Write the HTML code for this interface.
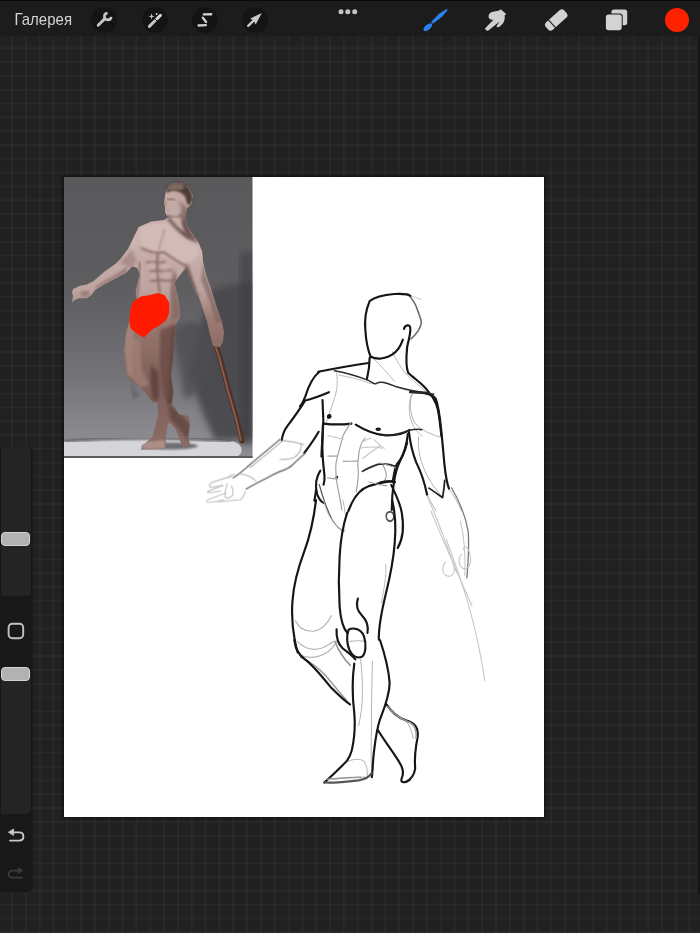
<!DOCTYPE html>
<html><head><meta charset="utf-8">
<style>
html,body{margin:0;padding:0;}
body{width:700px;height:933px;overflow:hidden;position:relative;background:#212121;font-family:"Liberation Sans",sans-serif;}
#grid{position:absolute;left:0;top:0;width:700px;height:933px;
background-image:linear-gradient(to right, rgba(255,255,255,0.03) 2px, transparent 2px),linear-gradient(to bottom, rgba(255,255,255,0.03) 2px, transparent 2px);
background-size:13.83px 13.82px;background-position:11.0px 5.9px;}
#top{position:absolute;left:0;top:0;width:700px;height:36px;background:#1c1c1c;border-top:1.5px solid #0a0a0a;box-sizing:border-box;}
#gal{position:absolute;left:14px;top:10px;font-size:15px;color:#d6d6d6;letter-spacing:0.1px;}
.circ{position:absolute;top:6px;width:26px;height:26px;border-radius:50%;background:#141414;}
#canvas{position:absolute;left:64px;top:177px;width:480px;height:640px;background:#fff;box-shadow:0 0 3px 1px rgba(0,0,0,0.6);}
#photo{position:absolute;left:0;top:0;width:188.5px;height:281px;background:#555;}
#side{position:absolute;left:0;top:447px;width:33px;height:445px;background:#181818;border-radius:0 5px 5px 0;}
.track{position:absolute;left:1px;width:30px;background:#242424;border-radius:0 5px 5px 0;}
.thumb{position:absolute;left:1px;width:29px;height:14px;background:#b2b2b2;border:1px solid #d2d2d2;box-sizing:border-box;border-radius:4px;}
</style></head><body>
<div id="grid"></div>
<div style="position:absolute;left:697.5px;top:36px;width:2.5px;height:858px;background:#161616;"></div>
<div id="top">
  <div class="circ" style="left:91.4px"></div>
  <div class="circ" style="left:141.9px"></div>
  <div class="circ" style="left:191.9px"></div>
  <div class="circ" style="left:241.9px"></div>
  <svg style="position:absolute;left:0;top:0;will-change:transform" width="700" height="36" viewBox="0 0 700 36">
    <text x="14.5" y="24" font-family="Liberation Sans" font-size="16.2" fill="#d4d4d4" textLength="57.5" lengthAdjust="spacingAndGlyphs">Галерея</text>
    <!-- wrench -->
    <g stroke="#c4c4c4" fill="none" stroke-linecap="round">
      <path d="M98.2 24.3 L104.6 17.9" stroke-width="2.9"/>
      <path d="M111.2 15.9 A3.4 3.4 0 1 1 107.6 12.1" stroke-width="2.7" stroke-linecap="butt"/>
    </g>
    <!-- magic wand -->
    <g fill="#cfcfcf" stroke="none">
      <path d="M149.4 25.4 L155.5 19.3" stroke="#c8c8c8" stroke-width="2.9" stroke-linecap="round"/>
      <path d="M156.5 18.3 L160.4 14.4" stroke="#d8d8d8" stroke-width="2.9" stroke-linecap="round"/>
      <path d="M154.4 17.4 L158.2 21.2" stroke="#141414" stroke-width="0.9"/>
      <path d="M151.6 12.2 L152.3 14.7 L154.8 15.4 L152.3 16.1 L151.6 18.6 L150.9 16.1 L148.4 15.4 L150.9 14.7 Z"/>
      <circle cx="156.6" cy="13.1" r="1"/>
    </g>
    <!-- S tool -->
    <g stroke="#d0d0d0" stroke-width="2.4" stroke-linecap="round" fill="none">
      <path d="M203.8 13.4 L211.2 13.3"/>
      <path d="M202.8 16.8 L206.1 20.9"/>
      <path d="M198.6 24.5 L205.8 24.1"/>
    </g>
    <!-- arrow -->
    <g fill="#c8c8c8" stroke="none">
      <path d="M248.2 24.8 L254.6 18.6" stroke="#c8c8c8" stroke-width="2.4" stroke-linecap="round"/>
      <path d="M261.8 12.1 L250.2 17.4 L253.6 19.5 L255.7 23.4 Z"/>
    </g>
    <!-- dots -->
    <circle cx="341" cy="10.7" r="2.5" fill="#c4c4c4"/>
    <circle cx="347.8" cy="10.7" r="2.5" fill="#c4c4c4"/>
    <circle cx="354.7" cy="10.7" r="2.5" fill="#c4c4c4"/>
    <!-- brush -->
    <g fill="#2b80f2" stroke="none">
      <path d="M432.8 22.4 L441.6 16.0 L447.4 9.0 C447.2 8.4 446.9 8.1 446.6 8.2 L439.0 13.0 L431.4 20.9 Z" stroke="#2b80f2" stroke-width="0.5" stroke-linejoin="round"/>
      <ellipse cx="427.8" cy="26.2" rx="5.3" ry="2.6" transform="rotate(-40 427.8 26.2)"/>
    </g>
    <!-- smudge -->
    <path fill="#d0d0d0" d="M485.2 27.2 L493.6 18.4 C491.4 19.2 489.2 18.4 488.6 16.2 C488.2 13.8 489.6 11.6 492 10.9 L499.2 9.6 L500.6 8.2 L506.2 12.9 L504.6 14.6 C505.2 17.2 504.4 20.6 502.8 22.4 L499.8 25.6 C498.6 26.6 497.0 26.6 496.4 25.6 L499.6 20.4 L488.4 29.6 C487.0 30.2 484.8 29.0 485.2 27.2 Z"/>
    <!-- eraser -->
    <g transform="translate(556.2,19) rotate(-42)">
      <rect x="-12.4" y="-5.0" width="24.8" height="10.0" rx="3.4" fill="#d2d2d2"/>
      <rect x="-6.2" y="-5.5" width="1.1" height="11" fill="#1c1c1c"/>
    </g>
    <!-- layers -->
    <rect x="611.4" y="8.4" width="15.8" height="15.8" rx="2.6" fill="#d0d0d0"/>
    <rect x="604.9" y="12.4" width="17.8" height="17.8" rx="3.2" fill="#1c1c1c"/>
    <rect x="605.9" y="13.4" width="15.8" height="15.8" rx="2.6" fill="#d4d4d4"/>
    <!-- red color -->
    <circle cx="677" cy="19" r="12" fill="#ff2200"/>
  </svg>
</div>
<div id="canvas">
  </div>
<svg style="position:absolute;left:0;top:0" width="700" height="933" viewBox="0 0 700 933">
<defs>
  <clipPath id="pc"><rect x="64" y="177" width="188.5" height="281"/></clipPath>
  <linearGradient id="bgL" x1="0" y1="0" x2="0" y2="1">
    <stop offset="0" stop-color="#59595b"/>
    <stop offset="0.4" stop-color="#5e5e61"/>
    <stop offset="0.7" stop-color="#727277"/>
    <stop offset="0.9" stop-color="#88888e"/>
    <stop offset="1" stop-color="#8c8c92"/>
  </linearGradient>
  <linearGradient id="skin" x1="0" y1="0" x2="0" y2="1">
    <stop offset="0" stop-color="#bca4a0"/>
    <stop offset="0.2" stop-color="#cab2ad"/>
    <stop offset="0.4" stop-color="#bea4a0"/>
    <stop offset="0.52" stop-color="#98786f"/>
    <stop offset="0.75" stop-color="#7e5e57"/>
    <stop offset="1" stop-color="#8c6c64"/>
  </linearGradient>
  <clipPath id="bodyc"><path id="bodyp" d="M171.6 183.4 L181.6 182.7 L188.7 187 L193 195.6 L191.6 204.1 L187 208.4 L185 217 L187 226 L193 235 L198.7 243 L202 251 L203 262 L206 275 L211 289 L217 308 L222 322 L224 332 L223 342 L220 347 L213 346 L210 335 L207 322 L200 300 L194 289 L189 277 L187 267 L180 275 L174.3 283 L177 293 L179 303 L180 317 L176 324 L174.4 341 L173.5 357 L171 375 L173.5 392 L172 404 L179.5 414.5 L188.5 416 L190 425 L188.5 437 L190 444.5 L182.5 447.5 L181 443 L175 428 L169 422 L167.5 425 L166 437 L166 447.5 L164.5 449 L141 449.7 L142 446 L152.5 437 L155.5 425 L158.5 413 L157 402 L152.5 402.5 L145 392 L136 384.5 L128.5 378.5 L125.5 369.5 L124 350 L126.2 332 L129.7 320 L131 308 L134 301 L137 300 L135.7 293 L137 285.7 L140 274 L137 268 L132.6 266.3 L125.7 273.1 L114.3 278.9 L104 284.6 L94.9 290.3 L91.4 294.9 L86.9 298.3 L78.9 298.3 L74.3 300.6 L72 302.3 L73 296 L72 292.6 L73.1 289.1 L80 285.7 L86.9 284.6 L93.7 281 L104 272 L116.6 262.9 L121 258.3 L128 249 L132.6 240 L138.6 227 L151.4 221.4 L164.3 220 L167 218 L169 217 L167 216 L165 212 L165 207 L164 203 L165 197 L166 190 Z"/></clipPath>
  <filter id="bl3"><feGaussianBlur stdDeviation="3"/></filter>
  <filter id="bl2"><feGaussianBlur stdDeviation="1.6"/></filter>
  <filter id="bl1"><feGaussianBlur stdDeviation="0.8"/></filter>
</defs>
<g clip-path="url(#pc)">
  <rect x="64" y="177" width="189" height="281" fill="url(#bgL)"/>
  <!-- wall shadow right -->
  <path d="M212 290 C225 286 240 284 253 282 L253 440 L215 440 C205 420 195 395 190 370 C195 340 205 310 212 290 Z" fill="#4a4a4e" filter="url(#bl3)" opacity="0.95"/>
  <path d="M172 330 C185 320 200 315 215 340 C210 370 200 395 185 400 Z" fill="#4e4e52" filter="url(#bl3)" opacity="0.8"/>
  <path d="M240 255 L253 250 L253 445 L241 445 Z" fill="#3e3e42" filter="url(#bl3)" opacity="0.6"/>
  <path d="M130 380 L140 395 L133 400 Z" fill="#6a6a70" filter="url(#bl1)"/>
  <!-- platform -->
  <path d="M64 441 C110 437 180 437 232 441 C244 444 244 454 236 457 L64 457 Z" fill="#d6d6da"/>
  <path d="M64 441.5 C110 437.5 180 437.5 232 441.5" stroke="#4a4a4e" stroke-width="1.8" fill="none" filter="url(#bl1)"/>
  <ellipse cx="170" cy="446" rx="28" ry="3.5" fill="#6e6e72" filter="url(#bl1)"/>
  <rect x="64" y="456" width="189" height="2" fill="#5a5a5e"/>
  <!-- staff -->
  <path d="M211 330 L220 358 L229 392 L237 420 L242 441" stroke="#4e3228" stroke-width="5.2" stroke-linecap="round" fill="none"/>
  <path d="M211 330 L220 358 L229 392 L237 420 L241.5 440" stroke="#8a5a4a" stroke-width="2" stroke-linecap="round" fill="none" transform="translate(-0.7,0)"/>
  <!-- body -->
  <path d="M171.6 183.4 L181.6 182.7 L188.7 187 L193 195.6 L191.6 204.1 L187 208.4 L185 217 L187 226 L193 235 L198.7 243 L202 251 L203 262 L206 275 L211 289 L217 308 L222 322 L224 332 L223 342 L220 347 L213 346 L210 335 L207 322 L200 300 L194 289 L189 277 L187 267 L180 275 L174.3 283 L177 293 L179 303 L180 317 L176 324 L174.4 341 L173.5 357 L171 375 L173.5 392 L172 404 L179.5 414.5 L188.5 416 L190 425 L188.5 437 L190 444.5 L182.5 447.5 L181 443 L175 428 L169 422 L167.5 425 L166 437 L166 447.5 L164.5 449 L141 449.7 L142 446 L152.5 437 L155.5 425 L158.5 413 L157 402 L152.5 402.5 L145 392 L136 384.5 L128.5 378.5 L125.5 369.5 L124 350 L126.2 332 L129.7 320 L131 308 L134 301 L137 300 L135.7 293 L137 285.7 L140 274 L137 268 L132.6 266.3 L125.7 273.1 L114.3 278.9 L104 284.6 L94.9 290.3 L91.4 294.9 L86.9 298.3 L78.9 298.3 L74.3 300.6 L72 302.3 L73 296 L72 292.6 L73.1 289.1 L80 285.7 L86.9 284.6 L93.7 281 L104 272 L116.6 262.9 L121 258.3 L128 249 L132.6 240 L138.6 227 L151.4 221.4 L164.3 220 L167 218 L169 217 L167 216 L165 212 L165 207 L164 203 L165 197 L166 190 Z" fill="url(#skin)"/>
  <g clip-path="url(#bodyc)">
    <!-- highlights -->
    <path d="M140 228 C150 222 165 220 178 226 C190 232 198 240 200 252 C196 262 188 266 178 262 C168 258 160 254 150 252 C142 250 138 240 140 228 Z" fill="#d2bcb8" filter="url(#bl2)" opacity="0.95"/>
    <ellipse cx="134" cy="240" rx="5" ry="9" fill="#ccb4b0" filter="url(#bl2)"/>
    <ellipse cx="171" cy="198" rx="6" ry="11" fill="#c6aaa4" filter="url(#bl1)"/>
    <ellipse cx="156" cy="276" rx="9" ry="12" fill="#bfa5a0" filter="url(#bl2)" opacity="0.8"/>
    <!-- shadows -->
    <path d="M168 214 C172 222 178 228 186 232 C192 236 196 240 199 244 L186 238 C178 232 172 226 168 220 Z" fill="#6e5450" filter="url(#bl2)"/>
    <path d="M186 208 L191 232 L197 240 L186 236 L181 222 Z" fill="#735854" filter="url(#bl1)"/>
    <path d="M141 248 C150 252 158 254 163 252 C170 256 178 262 186 266" stroke="#8e706b" stroke-width="2.2" fill="none" filter="url(#bl1)"/>
    <path d="M165 229 L158 251" stroke="#a48882" stroke-width="1.2" filter="url(#bl1)"/>
    <path d="M187 263 L199 298 L193 299 L183 276 Z" fill="#6a524e" filter="url(#bl2)"/>
    <filter id="bl12"><feGaussianBlur stdDeviation="1.1"/></filter>
    <path d="M158 253 C156 266 157 280 160 292 M146 262 C152 263 158 263 166 262 M150 271 C156 271 162 271 172 270 M150 281 C156 280 165 280 174 281" stroke="#7a5c56" stroke-width="2.2" fill="none" filter="url(#bl12)" opacity="0.75"/>
    <ellipse cx="152" cy="266" rx="4" ry="3.5" fill="#cdb5b0" filter="url(#bl1)" opacity="0.6"/>
    <ellipse cx="165" cy="267" rx="4" ry="3.5" fill="#cdb5b0" filter="url(#bl1)" opacity="0.6"/>
    <ellipse cx="153" cy="276" rx="4" ry="3.5" fill="#c8b0ab" filter="url(#bl1)" opacity="0.6"/>
    <ellipse cx="166" cy="276" rx="4" ry="3.5" fill="#c8b0ab" filter="url(#bl1)" opacity="0.6"/>
    <path d="M174 268 L180 288 L180 317 L172 320 L170 290 Z" fill="#846662" filter="url(#bl2)" opacity="0.8"/>
    <path d="M140 262 L138 290 L136 300" stroke="#8a6a66" stroke-width="2" fill="none" filter="url(#bl1)"/>
    <path d="M201 250 L203 262 L206 275 L211 289" stroke="#d8c4c0" stroke-width="1" fill="none" filter="url(#bl1)"/>
    <path d="M203 262 L206 275 L211 289 L217 308 L222 322 L216 322 L209 300 L201 280 Z" fill="#7a605c" filter="url(#bl1)" opacity="0.6"/>
    <path d="M125.7 273.1 L114.3 278.9 L104 284.6 L94.9 290.3 L96 286 L106 280 L118 273 L128 266 Z" fill="#8a6c68" filter="url(#bl1)" opacity="0.7"/>
    <path d="M120 262 L132 250 L137 262 L130 268 Z" fill="#9a7c78" filter="url(#bl2)" opacity="0.6"/>
    <path d="M80 292 L88 290 L90 296 L82 297 Z" fill="#8a6c68" filter="url(#bl1)" opacity="0.6"/>
    <path d="M136 300 L145 306 L140 318 Z" fill="#8a6c68" filter="url(#bl2)" opacity="0.6"/>
    <path d="M176 324 L174.4 341 L173.5 357 L171 375 L173.5 392 L172 404 L167 404 L168 380 L170 350 L171 330 Z" fill="#553c38" filter="url(#bl1)" opacity="0.8"/>
    <path d="M124 350 L126 332 L130 320 L134 330 L131 355 L133 372 L128 378 Z" fill="#a88a82" filter="url(#bl1)" opacity="0.7"/>
    <!-- legs shading -->
    <path d="M160 330 L176 324 L174 341 L172 360 L170 380 L173 395 L165 400 L160 370 Z" fill="#6a4c46" filter="url(#bl2)" opacity="0.8"/>
    <path d="M128 335 L140 340 L142 370 L150 385 L140 388 L128 375 Z" fill="#a4827a" filter="url(#bl2)" opacity="0.7"/>
    <path d="M150 365 L158 372 L159 395 L157 402 L152 398 Z" fill="#5a403c" filter="url(#bl2)" opacity="0.8"/>
    <path d="M168 404 L180 414 L190 425 L188 440 L180 430 L170 418 Z" fill="#5e4440" filter="url(#bl2)" opacity="0.8"/>
    <path d="M143 442 L165 440 L165 449 L142 449 Z" fill="#b49890" filter="url(#bl1)" opacity="0.8"/>
  </g>
  <!-- face details -->
  <g clip-path="url(#bodyc)">
    <path d="M167 199 C170 198 173 199 175 200" stroke="#7a605a" stroke-width="1.6" fill="none" filter="url(#bl1)"/>
    <path d="M165.5 201 L164 205 L166 206" stroke="#8a6e68" stroke-width="1.2" fill="none" filter="url(#bl1)"/>
    <path d="M166 210 L169 210.5" stroke="#8a6e68" stroke-width="1" fill="none" filter="url(#bl1)"/>
    <path d="M178 200 C182 206 182 212 178 217 L186 222 L188 208 Z" fill="#8a6c66" filter="url(#bl2)" opacity="0.8"/>
    <path d="M167 216 C172 218 177 218 182 215" stroke="#7a5e58" stroke-width="1.4" fill="none" filter="url(#bl1)"/>
  </g>
  <!-- hair -->
  <path d="M165.5 191 L167 186 L172 183 L178 182.3 L184 183.5 L189 187.5 L192 194 L192.5 200 L189.5 206 L187 203 L185 196 L180 192 L173 190.5 L168 192.5 Z" fill="#4e3a35" filter="url(#bl1)"/>
  <path d="M166.5 190 L169 185 L175 183 L182 184 L185 188 L180 190 L172 190 Z" fill="#806a62" filter="url(#bl1)"/>
  <!-- red blob -->
  <path d="M134 301.3 L141.1 297 L149.7 295.6 L158.3 293.4 L164.4 295.6 L168.7 302.7 L168.7 312.7 L165.9 319.9 L158.7 325.6 L153 328.4 L149.7 331.3 L144 337 L138.3 334.1 L131.1 328.4 L129.7 319.9 L131.1 308.4 Z" fill="#ff1a00" stroke="#ff1a00" stroke-width="1" stroke-linejoin="round"/>
</g>
</svg>
<svg style="position:absolute;left:0;top:0" width="700" height="933" viewBox="0 0 700 933" fill="none" stroke-linecap="round" stroke-linejoin="round">
<defs><filter id="sk" x="-5%" y="-5%" width="110%" height="110%"><feGaussianBlur stdDeviation="0.35"/></filter></defs>
<g filter="url(#sk)">
<!-- T1 head/shoulders -->
<g transform="translate(300,285) scale(0.2142857)">
  <g stroke="#b8b8b8" stroke-width="4.5">
    
    <path d="M430 310 C450 350 470 390 500 420 C530 450 560 470 590 500"/>
    <path d="M345 345 C380 380 410 410 440 450"/>
    <path d="M170 410 C180 460 170 510 150 560 C140 590 130 620 120 650"/>
    <path d="M180 420 C230 430 280 440 330 460"/>
    <path d="M520 510 C505 550 505 610 530 660 C545 685 560 698 570 705"/>
  </g>
  <g stroke="#6a6a6a" stroke-width="7.5">
    <path d="M502 42 C520 60 540 90 548 115 C556 140 566 160 566 175 C564 195 548 225 518 252"/>
  </g>
  <g stroke="#bdbdbd" stroke-width="4.5">
    <path d="M510 50 C530 55 550 60 565 68"/>
  </g>
  <g stroke="#141414" stroke-width="10">
    <path d="M330 72 C350 55 390 47 440 42 C480 40 505 42 515 50"/>
    <path d="M325 75 C310 110 300 160 305 210 C308 260 315 300 330 335"/>
    <path d="M330 335 C360 350 400 345 430 325 C455 310 470 285 480 255"/>
    <path d="M485 205 C490 185 515 180 515 205 C515 235 505 262 500 290 C495 340 492 380 505 410 C525 430 555 450 575 470 C590 485 598 495 602 502"/>
    <path d="M325 340 C325 370 322 400 312 440"/>
    <path d="M85 405 C150 392 230 377 320 364"/>
    <path d="M90 405 C60 430 40 470 25 520 C15 545 8 558 0 566"/>
    <path d="M20 540 C60 530 100 515 135 500"/>
    <path d="M600 500 C630 530 645 570 650 620 C655 660 658 690 660 705"/>
  </g>
  <g stroke="#2a2a2a" stroke-width="7">
    <path d="M160 400 C220 410 280 430 320 445 C340 455 345 465 355 460 C380 445 410 460 450 475 C500 490 550 500 600 502"/>
  </g>
  <g fill="#141414" stroke="none">
    <circle cx="137" cy="612" r="10"/>
    <ellipse cx="365" cy="673" rx="13" ry="8"/>
  </g>
</g>
<!-- T2 torso -->
<g transform="translate(300,400) scale(0.2142857)">

  <g stroke="#555" stroke-width="6">
    <path d="M90 395 C105 450 125 510 150 560 C170 590 185 605 205 612"/>
    <ellipse cx="420" cy="545" rx="17" ry="22"/>
  </g>
  <g stroke="#141414" stroke-width="10">
    <path d="M105 0 C110 60 110 130 105 190 C102 240 108 300 114 350 C116 370 114 385 110 395"/>
    <path d="M95 330 C75 360 70 400 80 440 C90 465 100 475 110 480"/>
    <path d="M75 420 C72 440 70 455 67 470"/>
    <path d="M110 110 C150 115 200 115 240 110"/>
    <path d="M260 115 C300 140 350 162 400 165 C450 166 490 155 510 140"/>
    <path d="M500 200 C490 240 470 280 452 300 C440 320 440 350 432 380"/>
    <path d="M432 380 C400 380 360 390 320 402 C290 412 262 440 242 480 C236 495 230 505 225 520"/>
  </g>
  <g fill="#141414" stroke="none">
    <circle cx="172" cy="360" r="6"/>
  </g>
</g>
<!-- abs detail -->
<g transform="translate(320,420) scale(0.1285714)">
  <g stroke="#a0a0a0" stroke-width="9">
    <path d="M240 20 C220 50 195 90 180 120 C165 180 140 260 125 330 C118 400 125 470 145 560 C155 610 165 660 170 700"/>
    <path d="M350 140 C325 170 305 210 300 280 C295 320 290 350 298 400 C300 450 292 500 282 560"/>
    <path d="M60 280 C90 282 110 282 135 280"/>
    <path d="M180 322 C220 320 255 322 292 320"/>
    <path d="M60 450 C90 455 110 458 135 460"/>
    <path d="M490 350 C505 380 520 410 515 440 C510 460 505 470 498 478"/>
    <path d="M380 482 C430 498 470 505 520 512"/>
  </g>
  <g stroke="#c4c4c4" stroke-width="8">
    <path d="M320 180 C340 160 370 150 400 140"/>
    <path d="M330 300 C370 270 420 230 470 200"/>
    <path d="M420 150 C440 170 470 200 500 222"/>
    <path d="M310 220 C360 210 420 200 480 220"/>
    <path d="M60 120 C100 130 140 140 180 150"/>
  </g>
  <g stroke="#2a2a2a" stroke-width="13">
    <path d="M330 400 C360 380 400 362 450 345 C490 338 540 338 590 362"/>
  </g>
</g>
<!-- T3 left arm -->
<g transform="translate(195,360) scale(0.2142857)">


  <g stroke="#141414" stroke-width="10">
    <path d="M512 192 C490 230 460 270 430 310 C415 330 408 350 405 375"/>
    <path d="M577 335 C560 365 537 398 510 434"/>
    <path d="M590 450 C592 400 596 350 597 300"/>
  </g>
  <circle cx="625" cy="265" r="10" fill="#141414" stroke="none"/>
</g>
<!-- hand -->
<g transform="translate(200,440) scale(0.1142857)">
  <g stroke="#c0c0c0" stroke-width="10">
    <path d="M360 300 C400 300 450 320 490 360"/>
    <path d="M270 322 C220 332 170 350 120 365 C90 375 75 395 85 410 C110 415 150 405 200 395"/>
    <path d="M200 398 C150 412 110 430 72 446 C60 452 68 462 90 458 C120 455 150 450 180 445"/>
    <path d="M225 462 C170 482 120 502 72 522 C52 532 56 548 82 546 C120 542 170 532 210 522"/>
    <path d="M240 382 C225 422 215 470 222 502 C242 512 270 502 290 482"/>
    <path d="M275 402 C288 422 292 452 286 482"/>
    <path d="M162 542 C222 532 292 527 352 522 C372 512 387 482 397 452"/>
    <path d="M300 300 C270 310 250 320 240 330"/>
  </g>
  <g stroke="#767676" stroke-width="13">
    <path d="M920 115 C880 150 840 190 800 225 C770 250 735 262 700 275 C660 292 620 312 580 335 C520 365 460 395 405 428"/>
    <path d="M700 -5 C600 80 500 160 420 230 C380 265 330 310 290 330"/>
  </g>
  <g stroke="#b4b4b4" stroke-width="10">
    <path d="M730 0 C640 80 540 160 440 240"/>
    <path d="M725 5 C790 10 850 20 910 40"/>
    <path d="M885 30 C890 80 870 120 830 150 C790 170 760 170 700 170"/>
  </g>
</g>
<!-- T4 right arm -->
<g transform="translate(380,360) scale(0.2142857)">
  <g stroke="#b0b0b0" stroke-width="4.5">
    <path d="M150 160 C135 200 140 250 160 290 C180 320 220 340 280 360"/>
    <path d="M0 480 C30 488 50 495 75 505"/>
    <path d="M180 360 C175 420 190 480 220 540 C240 580 260 600 290 640"/>
    <path d="M220 630 C235 660 250 685 262 705"/>
    <path d="M320 600 C345 630 365 665 380 705"/>
  </g>
  <g stroke="#141414" stroke-width="10">
    <path d="M140 150 C190 150 240 155 260 180 C275 220 280 270 285 320 C290 370 295 420 300 480 C305 530 310 570 322 600"/>
    <path d="M135 335 C140 380 150 430 170 480 C190 520 208 570 220 630"/>
    <path d="M130 345 C125 400 110 440 90 480 C75 510 70 540 65 570 C60 600 55 640 55 700"/>
    <path d="M0 572 C20 566 42 562 70 570"/>
  </g>
  <g stroke="#1e1e1e" stroke-width="8">
    <path d="M228 598 C250 612 272 628 292 642 C296 620 300 590 302 562"/>
  </g>
  <g stroke="#2a2a2a" stroke-width="7">
    <path d="M250 160 C220 150 180 150 140 150"/>
    <path d="M0 350 C40 355 90 345 130 330 C150 325 170 320 195 325"/>
  </g>
</g>
<!-- T5 legs upper -->
<g transform="translate(270,500) scale(0.2142857)">
  <g stroke="#b8b8b8" stroke-width="4.5">
    <path d="M250 0 C260 50 280 90 320 130 C335 140 345 142 352 140"/>
    <path d="M340 0 C345 25 350 45 352 70"/>
    
    <path d="M540 300 C545 360 530 420 520 480"/>
  </g>
  <g stroke="#555" stroke-width="6">
    <ellipse cx="560" cy="75" rx="18" ry="22"/>
  </g>
  <g stroke="#141414" stroke-width="10">
    <path d="M215 0 C205 80 190 160 160 240 C130 320 110 400 105 470 C100 540 105 600 115 650 C120 680 125 700 130 712"/>
    <path d="M360 60 C340 120 330 180 325 260 C320 340 320 420 325 500 C330 560 342 600 362 622"/>
    <path d="M570 0 C585 60 588 130 582 200 C576 280 560 360 540 440 C522 515 506 590 508 652"/>
    <path d="M566 -70 C590 -20 610 20 615 60 C625 120 622 180 596 224"/>
    <path d="M410 460 C400 490 410 520 430 540 C450 560 460 590 455 620"/>
    
  </g>
</g>
<!-- knee detail -->
<g transform="translate(280,590) scale(0.1714286)">
  <g stroke="#b4b4b4" stroke-width="7">
    <path d="M90 180 C110 220 140 245 200 240 C250 230 280 190 300 150"/>
    <path d="M100 300 C140 340 190 355 240 340 C270 330 290 315 310 300"/>
    <path d="M120 380 C160 400 220 400 280 360 C300 345 320 320 330 300"/>
    <path d="M410 300 C440 295 470 295 495 300"/>
  </g>
  <g stroke="#9a9a9a" stroke-width="10">
    <path d="M320 300 C340 350 370 400 410 440"/>
  </g>
  <g stroke="#141414" stroke-width="12.5">
    <path d="M400 232 C430 215 475 230 490 270 C505 320 500 370 480 388 C455 400 425 390 405 350 C392 320 385 270 400 232 Z"/>
    <path d="M330 230 C328 270 335 310 365 340 C390 360 420 380 440 405"/>
  </g>
</g>
<!-- T6 lower legs -->
<g transform="translate(290,640) scale(0.2142857)">
  <g stroke="#b0b0b0" stroke-width="4.5">
    <path d="M250 580 C280 555 320 550 345 565 C362 590 362 620 360 645"/>
    <path d="M385 100 C382 200 380 300 380 420 C378 500 378 560 382 620"/>
    
    <path d="M330 90 C340 200 345 300 320 400"/>
    <path d="M200 650 C250 645 300 640 350 640"/>
    <path d="M540 375 C560 400 570 430 575 460"/>
  </g>
  <g stroke="#9a9a9a" stroke-width="7">
    <path d="M50 80 C90 100 130 125 170 170 C200 205 230 245 265 282"/>
  </g>
  <g stroke="#141414" stroke-width="10">
    <path d="M20 0 C25 40 40 70 70 90 C110 120 150 170 190 220 C220 250 250 280 280 300"/>
    <path d="M300 110 C290 180 290 260 300 340 C305 400 300 450 295 480 C290 520 275 560 250 580 C220 610 190 640 160 665"/>

    <path d="M420 0 C440 60 460 130 465 200 C465 260 440 320 420 370 C410 400 400 450 392 520 C386 570 386 610 382 640"/>
    <path d="M410 420 C440 470 480 520 510 570 C530 600 530 630 520 650 C515 668 540 668 560 652"/>
    <path d="M450 300 C470 330 500 360 540 375 C580 385 600 410 596 450 C586 500 580 550 584 600 C580 630 566 650 540 662"/>

  </g>
</g>
<g transform="translate(290,640) scale(0.2142857)" fill="none" stroke-linecap="round">
  <path d="M160 665 C200 668 260 662 320 655 C350 650 370 640 382 620" stroke="#555" stroke-width="10"/>
  <path d="M175 650 C220 645 280 640 330 640" stroke="#999" stroke-width="7"/>
  <path d="M455 310 C480 340 520 370 560 385 C585 400 592 430 588 460" stroke="#9a9a9a" stroke-width="7"/>
</g>
<!-- T7 right forearm & staff faint -->
<g transform="translate(400,480) scale(0.2572)">
  <g stroke="#777" stroke-width="5">
    <path d="M200 30 C230 80 255 140 265 200 C270 260 265 320 260 380"/>
  </g>
  <g stroke="#c4c4c4" stroke-width="4">
    <path d="M105 60 C130 120 160 190 180 250 C200 300 210 330 220 360"/>
    <path d="M120 120 C160 220 210 330 280 490"/>
    <path d="M180 230 C230 370 290 520 330 780"/>
    <path d="M178 318 C160 338 163 372 190 374 C212 374 216 345 206 325"/>
    <path d="M240 290 C225 300 225 340 250 345 C270 345 280 320 272 290 C266 262 252 250 246 270"/>
    <path d="M235 160 C250 220 255 290 252 370"/>
  </g>
</g>
</g>
</svg>
<div id="side">
  <div class="track" style="top:0;height:149px"></div>
  <div class="thumb" style="top:85px"></div>
  <div class="track" style="top:221px;height:146px"></div>
  <div class="thumb" style="top:220px"></div>
  <svg style="position:absolute;left:0;top:0" width="40" height="450" viewBox="0 447 40 450">
    <rect x="8.6" y="623.8" width="14.6" height="14.4" rx="3.6" fill="none" stroke="#c2c2c2" stroke-width="1.9"/>
    <g stroke="#c8c8c8" fill="none" stroke-width="1.9" stroke-linecap="round">
      <path d="M12.4 832.4 L19.4 832.4 C22.2 832.4 23.4 834.6 23.4 836.6 C23.4 838.8 22 840.6 19.4 840.6 L10 840.6"/>
    </g>
    <path d="M8.4 832.2 L13.6 829 L13.6 835.4 Z" fill="#c8c8c8" stroke="#c8c8c8" stroke-width="0.8" stroke-linejoin="round"/>
    <g stroke="#3a3a3a" fill="none" stroke-width="1.9" stroke-linecap="round">
      <path d="M18.8 870.6 L12.4 870.6 C9.8 870.6 8.6 872.6 8.6 874.4 C8.6 876.4 9.8 877.6 12.4 877.6 L22 877.6"/>
    </g>
    <path d="M23 870.4 L18 867.4 L18 873.4 Z" fill="#3a3a3a" stroke="#3a3a3a" stroke-width="0.8" stroke-linejoin="round"/>
  </svg>
</div>
</body></html>
